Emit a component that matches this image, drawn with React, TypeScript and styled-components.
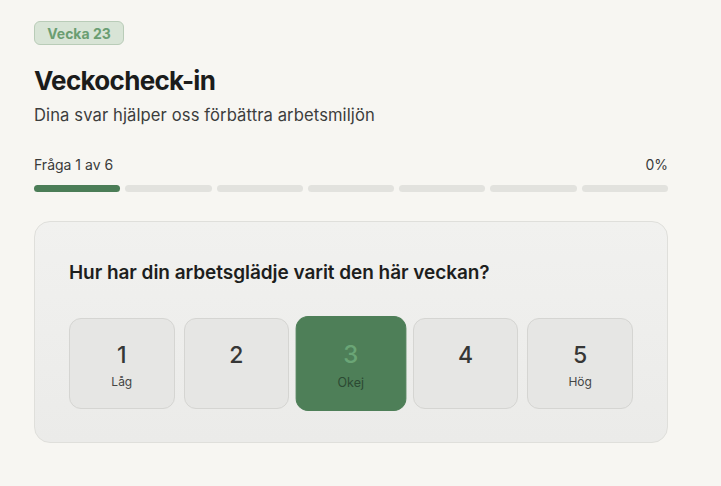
import React from "react";
import styled, { createGlobalStyle } from "styled-components";

const Global = createGlobalStyle`
  html, body { margin: 0; padding: 0; background: #f7f6f2; }
  body { font-family: "Inter", "Noto Sans", sans-serif; color: #1c1d1c; }
  * { box-sizing: border-box; }
`;

const Page = styled.div`
  width: 721px;
  height: 486px;
  padding: 21px 53px 0 34px;
  display: flex;
  flex-direction: column;
`;

const Badge = styled.div`
  align-self: flex-start;
  width: 90px;
  height: 24px;
  display: flex;
  align-items: center;
  justify-content: center;
  background: #d8e4d6;
  border: 1px solid #b9ccb8;
  border-radius: 6px;
  color: #6b9e72;
  font-size: 14px;
  font-weight: 700;
`;

const Title = styled.h1`
  margin: 20px 0 0;
  font-size: 26px;
  line-height: 32px;
  font-weight: 700;
  letter-spacing: -0.7px;
  color: #1b1c1b;
`;

const Subtitle = styled.p`
  margin: 7px 0 0;
  font-size: 16.6px;
  line-height: 22px;
  letter-spacing: 0.1px;
  color: #3d3e3d;
`;

const ProgressHead = styled.div`
  margin-top: 30px;
  display: flex;
  justify-content: space-between;
  font-size: 14px;
  line-height: 18px;
  color: #3a3b3a;
`;

const Segments = styled.div`
  margin-top: 11px;
  display: grid;
  grid-template-columns: repeat(7, 1fr);
  gap: 5px;
`;

const Segment = styled.div<{ $done: boolean }>`
  height: 7px;
  border-radius: 4px;
  background: ${(p) => (p.$done ? "#4b7d57" : "#e2e2de")};
`;

const Card = styled.section`
  margin-top: 29px;
  padding: 38px 34px 33px 34px;
  background: linear-gradient(180deg, #f1f1ef 0%, #ebebe9 100%);
  border: 1px solid #dfdfdb;
  border-radius: 16px;
`;

const Question = styled.h2`
  margin: 0;
  font-size: 19px;
  line-height: 25px;
  font-weight: 600;
  letter-spacing: -0.05px;
  color: #1d1e1d;
`;

const Options = styled.div`
  margin-top: 33px;
  display: grid;
  grid-template-columns: repeat(5, 1fr);
  gap: 9px;
`;

const Option = styled.button<{ $active: boolean }>`
  height: 91px;
  border-radius: 12px;
  border: 1px solid ${(p) => (p.$active ? "#4e7f58" : "#d5d5d2")};
  background: ${(p) => (p.$active ? "#4e7f58" : "#e6e6e4")};
  transform: ${(p) => (p.$active ? "scale(1.045)" : "none")};
  display: flex;
  flex-direction: column;
  align-items: center;
  justify-content: flex-start;
  padding: 22px 0 0;
  font-family: inherit;
  cursor: pointer;
`;

const Num = styled.span<{ $active: boolean }>`
  font-size: 23px;
  line-height: 28px;
  font-weight: 500;
  color: ${(p) => (p.$active ? "#6aa576" : "#363736")};
`;

const Label = styled.span<{ $active: boolean }>`
  margin-top: 5px;
  font-size: 12px;
  line-height: 15px;
  color: ${(p) => (p.$active ? "#2c4a33" : "#444544")};
`;

const options = [
  { n: 1, label: "Låg" },
  { n: 2, label: "" },
  { n: 3, label: "Okej" },
  { n: 4, label: "" },
  { n: 5, label: "Hög" },
];

export default function App() {
  const selected = 3;
  return (
    <>
      <Global />
      <Page>
        <Badge>Vecka 23</Badge>
        <Title>Veckocheck-in</Title>
        <Subtitle>Dina svar hjälper oss förbättra arbetsmiljön</Subtitle>
        <ProgressHead>
          <span>Fråga 1 av 6</span>
          <span>0%</span>
        </ProgressHead>
        <Segments>
          {Array.from({ length: 7 }).map((_, i) => (
            <Segment key={i} $done={i === 0} />
          ))}
        </Segments>
        <Card>
          <Question>Hur har din arbetsglädje varit den här veckan?</Question>
          <Options>
            {options.map((o) => (
              <Option key={o.n} $active={o.n === selected}>
                <Num $active={o.n === selected}>{o.n}</Num>
                {o.label && <Label $active={o.n === selected}>{o.label}</Label>}
              </Option>
            ))}
          </Options>
        </Card>
      </Page>
    </>
  );
}
